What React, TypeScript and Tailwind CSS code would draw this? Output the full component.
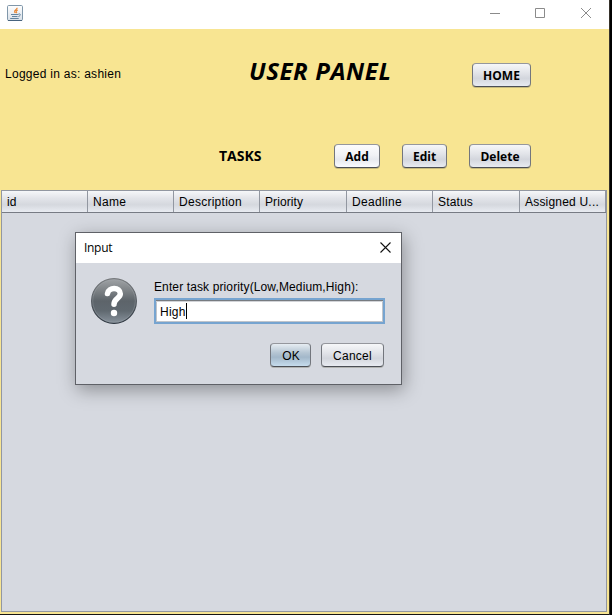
import type { ReactNode } from "react";

function SwingButton({ children, className }: { children: ReactNode; className: string }) {
  return (
    <button
      className={`flex h-6 shrink-0 items-center justify-center rounded-[4px] border border-t-[#95979d] border-r-[#73767d] border-b-[#4b4e55] border-l-[#73767d] pt-px whitespace-nowrap text-black shadow-[0_1px_0_rgba(110,110,90,0.35)] ${className}`}
    >
      {children}
    </button>
  );
}

const silver = "bg-[linear-gradient(#f6f7f9_0%,#e2e4e9_40%,#d3d6dd_65%,#e8ebf1_100%)]";
const bright = "bg-[linear-gradient(#fcfcfd_0%,#f1f2f5_45%,#e7e9ee_65%,#fafbff_100%)]";
const blue = "bg-[linear-gradient(#e6edf2_0%,#b5c5d3_40%,#a3b8ca_60%,#c6dced_100%)]";
const segoe = "font-['Open_Sans','Noto_Sans',sans-serif] font-bold";

const columns = [
  { name: "id", width: "w-[86px]", spacing: "" },
  { name: "Name", width: "w-[86px]", spacing: "tracking-[0.3px]" },
  { name: "Description", width: "w-[86px]", spacing: "tracking-[0.27px]" },
  { name: "Priority", width: "w-[87px]", spacing: "tracking-[0.1px]" },
  { name: "Deadline", width: "w-[86px]", spacing: "tracking-[0.32px]" },
  { name: "Status", width: "w-[87px]", spacing: "tracking-[0.15px]" },
  { name: "Assigned U...", width: "w-[86px]", spacing: "tracking-[0.2px]" },
];

function JavaIcon() {
  return (
    <svg width="16" height="16" viewBox="0 0 16 16">
      <defs>
        <linearGradient id="java" x2="0" y2="1">
          <stop stopColor="#fff" />
          <stop offset="1" stopColor="#d8e0e8" />
        </linearGradient>
      </defs>
      <rect x=".5" y=".5" width="15" height="15" rx="1.2" fill="url(#java)" stroke="#8097aa" />
      <path d="M1 15.5h14" stroke="#48647e" />
      <path d="M10.2 2.8c.2 1.8-3.5 2.2-2.6 4.2l.6 1M10.8 4.9c-2 .8-2.1 1.5-1.2 2.3l-.8 1" fill="none" stroke="#e98532" strokeWidth="1.1" />
      <path d="M4 9.5h7.5M5 11.5h5.5M3.2 13.5h8.5M11.5 9c2.6-.7 2.3 1.9-.1 2.5" fill="none" stroke="#64849f" strokeWidth="1" />
    </svg>
  );
}

function QuestionIcon() {
  return (
    <svg width="46" height="46" viewBox="0 0 46 46" className="shrink-0">
      <defs>
        <linearGradient id="disc" x2="0" y2="1">
          <stop stopColor="#a0a3a6" />
          <stop offset=".3" stopColor="#797e82" />
          <stop offset=".5" stopColor="#5d646a" />
          <stop offset=".72" stopColor="#606970" />
          <stop offset="1" stopColor="#89939d" />
        </linearGradient>
        <linearGradient id="rim" x2="0" y2="1">
          <stop stopColor="#777a7d" />
          <stop offset="1" stopColor="#2d3640" />
        </linearGradient>
      </defs>
      <circle cx="23" cy="23" r="22.4" fill="url(#disc)" stroke="url(#rim)" strokeWidth="1.1" />
      <circle cx="23" cy="23" r="21.3" fill="none" stroke="#a4abb1" strokeOpacity=".4" strokeWidth=".8" />
      <path d="M16.5 15.6C17.5 8.6 29.3 9 29.3 15.8C29.3 20.5 23 20.5 23 26.3" fill="none" stroke="#fff" strokeWidth="5.5" strokeLinecap="round" />
      <circle cx="23" cy="35" r="3.2" fill="#fff" />
    </svg>
  );
}

function InputDialog() {
  return (
    <div className="absolute top-[232px] left-[75px] flex h-[153px] w-[327px] flex-col border border-[#5f6167] bg-[#d6d9e0] shadow-[2px_5px_17px_rgba(0,0,0,0.34)]">
      <div className="flex h-[30px] shrink-0 items-center justify-between bg-white pr-[10px] pl-2">
        <span className="font-['Open_Sans','Noto_Sans',sans-serif] text-[12px] tracking-[-0.3px]">Input</span>
        <svg width="11" height="11" viewBox="0 0 11 11" className="mb-[2px]">
          <path d="M.5.5l10 10M10.5.5l-10 10" stroke="#111" strokeWidth="1.1" />
        </svg>
      </div>
      <div className="flex pt-[15px] pl-[15px]">
        <QuestionIcon />
        <div className="ml-[17px] flex w-[231px] flex-col">
          <span className="h-[19px] pt-[2px] leading-[15px] tracking-[0.12px] whitespace-nowrap">Enter task priority(Low,Medium,High):</span>
          <div className="mt-[1px] flex h-[26px] items-center border-2 border-[#76a4d0] bg-white pl-[4px] shadow-[inset_0_1px_0_#777b80,inset_0_2px_0_#d2d4d8,inset_0_-1px_0_#c0c4ca,inset_1px_0_0_#c0c4ca,inset_-1px_0_0_#c0c4ca]">
            <span className="pt-px tracking-[0.25px]">High</span>
            <span className="h-[16px] w-px bg-black" />
          </div>
        </div>
      </div>
      <div className="mt-[19px] flex justify-end gap-[10px] pr-[17px]">
        <SwingButton className={`w-[41px] border-[#47637c] pl-px ${blue}`}>OK</SwingButton>
        <SwingButton className={`w-[63px] tracking-[0.25px] ${silver}`}>Cancel</SwingButton>
      </div>
    </div>
  );
}

export default function App() {
  return (
    <div className="relative flex h-[615px] w-[612px] overflow-hidden bg-[#171514] font-['Liberation_Sans',Arial,sans-serif] text-[12px] text-black">
      <div className="flex h-[614px] w-[609px] flex-col bg-[#f8e592]">
        <header className="flex h-[29px] shrink-0 items-start justify-between bg-white pt-[5px] pr-[17px] pl-[7px]">
          <JavaIcon />
          <svg width="103" height="12" viewBox="0 0 103 12" className="mt-[2px]" fill="none" stroke="#8b8b8b">
            <path d="M1 6.5h10" />
            <path d="M46.5 1.5h9v9h-9z" />
            <path d="M92 1l10 10M102 1l-10 10" />
          </svg>
        </header>
        <section className="flex h-[90px] shrink-0 items-center pl-[5px]">
          <span className="w-[244px] tracking-[0.27px] whitespace-nowrap">Logged in as: ashien</span>
          <h1 className={`${segoe} w-[223px] pb-[6px] text-[24px] leading-[30px] tracking-[0.6px] whitespace-nowrap italic`}>USER PANEL</h1>
          <SwingButton className={`mt-[2px] w-[59px] text-[12px] ${segoe} ${silver}`}>HOME</SwingButton>
        </section>
        <section className="flex h-[71px] shrink-0 items-start pt-[25px] pl-[219px]">
          <h2 className={`${segoe} w-[115px] text-[14px] leading-[24px]`}>TASKS</h2>
          <SwingButton className={`mr-[22px] w-[46px] ${segoe} ${bright}`}>Add</SwingButton>
          <SwingButton className={`mr-[22px] w-[45px] ${segoe} ${silver}`}>Edit</SwingButton>
          <SwingButton className={`w-[62px] ${segoe} ${silver}`}>Delete</SwingButton>
        </section>
        <main className="ml-[1px] h-[422px] w-[606px] border border-[#9297a1] bg-[#d6d9e0]">
          <div className="flex h-[22px] border-b border-[#777b84] bg-[linear-gradient(#f6f7f9_0%,#e2e4e9_35%,#d5d8de_65%,#e8ebf1_100%)]">
            {columns.map((c) => (
              <div key={c.name} className={`flex shrink-0 items-center border-r border-[#9297a1] pl-[5px] whitespace-nowrap ${c.width} ${c.spacing}`}>
                {c.name}
              </div>
            ))}
          </div>
        </main>
      </div>
      <div className="h-full w-px bg-[#36322b]" />
      <div className="h-full w-[2px] bg-black" />
      <InputDialog />
    </div>
  );
}
